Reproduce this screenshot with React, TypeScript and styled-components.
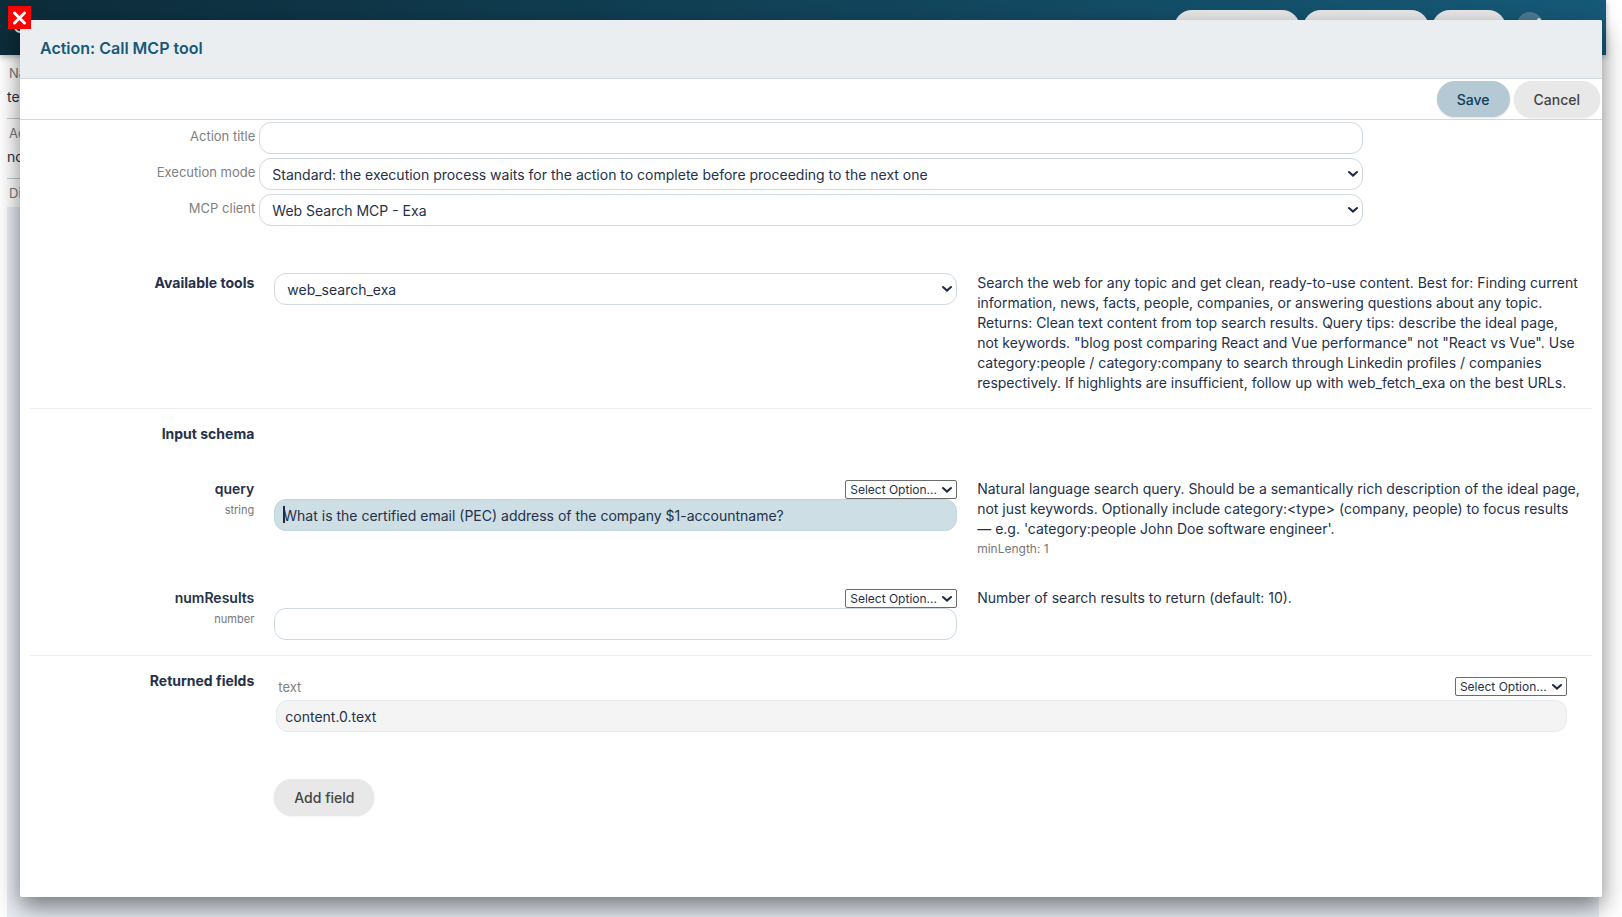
import React from "react";
import styled, { createGlobalStyle, css } from "styled-components";

const GlobalStyle = createGlobalStyle`
  *, *::before, *::after { box-sizing: border-box; }
  body {
    margin: 0;
    background: #fff;
    color: #25314a;
    font: 400 14px/20px Inter, "Liberation Sans", sans-serif;
    overflow: hidden;
  }
  h1, h2, p { margin: 0; }
  button, input, select { font-family: inherit; color: inherit; margin: 0; }
`;

const Page = styled.div`
  position: relative;
  height: 100vh;
  overflow: hidden;
  display: flex;
  flex-direction: column;
`;

const TopBar = styled.header`
  position: relative;
  flex: none;
  display: flex;
  align-items: flex-start;
  justify-content: flex-end;
  gap: 3px;
  height: 55px;
  margin-right: 16px;
  padding: 10px 63px 0 12px;
  background: linear-gradient(90deg, #0d2c3a, #165a78);
  box-shadow: 0 2px 6px rgba(0, 0, 0, 0.3);
`;

const BarLogo = styled.svg`
  width: 24px;
  height: 24px;
  margin-right: auto;
`;

const BarPill = styled.span<{ $width: number }>`
  flex: none;
  width: ${(p) => p.$width}px;
  height: 36px;
  border-radius: 18px;
  background: #e8e8e8;
`;

const BarIcon = styled.svg`
  width: 26px;
  height: 30px;
  margin-left: 8px;
`;

const BackPage = styled.main`
  flex: 1;
  display: flex;
  flex-direction: column;
  margin: 0 23px 0 7px;
  padding-top: 4px;
`;

const BackField = styled.div`
  height: 60px;
  border-bottom: 1px solid #c3ced8;
`;

const BackLabel = styled.div`
  height: 20px;
  margin: 4px 0;
  padding-left: 2px;
  font-size: 13px;
  color: #7a7a7a;
`;

const BackCanvas = styled.div`
  flex: 1;
  background: #e9eef5;
`;

const Dialog = styled.section`
  position: absolute;
  inset: 20px;
  display: flex;
  flex-direction: column;
  background: #fff;
  border-radius: 2px;
  box-shadow: 0 10px 25px rgba(0, 0, 0, 0.5);
`;

const DialogHeader = styled.header`
  display: flex;
  align-items: center;
  height: 59px;
  padding: 0 20px 2px;
  background: #eaeef1;
  border-bottom: 1px solid #cfd8df;
  border-radius: 2px 2px 0 0;
`;

const DialogTitle = styled.h1`
  font-size: 16px;
  line-height: 24px;
  font-weight: 600;
  color: #165a78;
`;

const Toolbar = styled.div`
  display: flex;
  justify-content: flex-end;
  align-items: center;
  gap: 4px;
  height: 41px;
  padding: 0 2px;
  border-bottom: 1px solid #cfd8df;
`;

const PillButton = styled.button<{ $primary?: boolean }>`
  height: 36px;
  padding: 0 20px;
  border: 0;
  border-radius: 18px;
  background: ${(p) => (p.$primary ? "#b4c9d3" : "#e8e8e8")};
  color: ${(p) => (p.$primary ? "#0f4058" : "#444")};
  font-size: 14px;
  font-weight: 500;
  box-shadow: 0 1px 2px rgba(0, 0, 0, 0.12);
`;

const CloseButton = styled.button`
  position: absolute;
  top: 6px;
  left: 8px;
  display: flex;
  align-items: center;
  justify-content: center;
  width: 23px;
  height: 23px;
  padding: 0;
  border: 0;
  background: #f00;
`;

const SettingsForm = styled.div`
  display: flex;
  flex-direction: column;
  gap: 4px;
  padding-top: 2px;
`;

const SettingRow = styled.div`
  display: grid;
  grid-template-columns: 15% 70%;
`;

const SettingLabel = styled.label`
  padding: 4px 2px 0 0;
  text-align: right;
  font-size: 13px;
  color: #808080;
`;

const SettingControl = styled.div`
  padding: 0 2px;
`;

const box = css`
  display: block;
  width: 100%;
  height: 32px;
  border: 1px solid #cfd8df;
  border-radius: 12px;
  background: #fff;
  font-size: 14px;
  outline: none;
`;

const TextBox = styled.input<{ $tone?: "focus" | "readonly" }>`
  ${box}
  padding: 0 8px;
  ${(p) => p.$tone === "focus" && css`background: #cddee5; border-color: #c3d4dd;`}
  ${(p) => p.$tone === "readonly" && css`background: #f4f4f4; border-color: #e6ebef;`}
`;

const SelectWrap = styled.div`
  position: relative;
`;

const SelectArrow = styled.svg`
  position: absolute;
  right: 5px;
  top: calc(50% - 4px);
  width: 10px;
  height: 8px;
  pointer-events: none;
`;

const SelectBox = styled.select`
  ${box}
  appearance: none;
  padding: 0 20px 0 12px;
`;

const MiniSelect = styled.select`
  display: block;
  appearance: none;
  width: 112px;
  height: 19px;
  padding: 0 0 0 4px;
  border: 1px solid #6b6b6b;
  border-radius: 2px;
  background: #fff;
  font-size: 12px;
`;

const Sections = styled.div`
  padding: 32px 10px 0;
`;

const Section = styled.section`
  display: flex;
  flex-direction: column;
  gap: 30px;
  padding: 15px 0;
  & + & { border-top: 1px solid #ebedee; }
`;

const FieldRow = styled.div<{ $wide?: boolean }>`
  display: grid;
  grid-template-columns: ${(p) => (p.$wide ? "15% 85%" : "15% 45% 40%")};
`;

const Cell = styled.div<{ $right?: boolean }>`
  padding: 0 10px;
  text-align: ${(p) => (p.$right ? "right" : "left")};
`;

const SectionTitle = styled.h2`
  min-height: 25px;
  font-size: 14px;
  line-height: 20px;
  font-weight: 700;
`;

const FieldName = styled.label<{ $strong?: boolean }>`
  display: block;
  font-weight: ${(p) => (p.$strong ? 700 : 600)};
`;

const FieldType = styled.div`
  font-size: 11px;
  line-height: 22px;
  color: #777;
`;

const Constraint = styled.div`
  font-size: 12px;
  line-height: 19px;
  color: #777;
`;

const InputStack = styled.div`
  position: relative;
  display: flex;
  flex-direction: column;
  align-items: flex-end;
  padding-top: 1px;
`;

const Caret = styled.span`
  position: absolute;
  left: 9px;
  bottom: 8px;
  width: 2px;
  height: 17px;
  background: #1e2a3e;
`;

const Returned = styled.div`
  display: flex;
  flex-direction: column;
  gap: 4px;
  width: 99%;
  padding: 6px 2px 0;
`;

const ReturnedHead = styled.div`
  display: flex;
  justify-content: space-between;
  align-items: center;
  height: 19px;
  padding-left: 2px;
`;

const ReturnedLabel = styled.label`
  font-size: 13px;
  color: #808080;
`;

const AddArea = styled.div`
  padding-top: 47px;
`;

function Arrow() {
  return (
    <SelectArrow viewBox="0 0 10 8" aria-hidden="true">
      <path d="M1 2l4 3.6L9 2" fill="none" stroke="#1e2a3e" strokeWidth="2" strokeLinecap="round" />
    </SelectArrow>
  );
}

function WideSelect({ id, value }: { id: string; value: string }) {
  return (
    <SelectWrap>
      <SelectBox id={id}>
        <option>{value}</option>
      </SelectBox>
      <Arrow />
    </SelectWrap>
  );
}

function OptionPicker({ label }: { label: string }) {
  return (
    <SelectWrap>
      <MiniSelect aria-label={label}>
        <option>Select Option...</option>
      </MiniSelect>
      <Arrow />
    </SelectWrap>
  );
}

const backFields = [
  ["Na", "te"],
  ["Ac", "no"],
];

export default function App() {
  return (
    <>
      <GlobalStyle />
      <Page>
        <TopBar>
          <BarLogo viewBox="0 0 24 24" aria-hidden="true">
            <circle cx="8" cy="17" r="5" fill="none" stroke="#dfe5e8" strokeWidth="2" />
          </BarLogo>
          <BarPill $width={126} />
          <BarPill $width={126} />
          <BarPill $width={74} />
          <BarIcon viewBox="0 0 26 30" aria-hidden="true">
            <circle cx="13" cy="15" r="13" fill="#4c7a90" />
            <circle cx="22" cy="10" r="2" fill="#e8e8e8" />
          </BarIcon>
        </TopBar>
        <BackPage>
          {backFields.map(([label, value]) => (
            <BackField key={label}>
              <BackLabel>{label}</BackLabel>
              {value}
            </BackField>
          ))}
          <BackLabel>Di</BackLabel>
          <BackCanvas />
        </BackPage>

        <Dialog role="dialog" aria-labelledby="dialog-title">
          <DialogHeader>
            <DialogTitle id="dialog-title">Action: Call MCP tool</DialogTitle>
          </DialogHeader>
          <Toolbar>
            <PillButton type="button" $primary>Save</PillButton>
            <PillButton type="button">Cancel</PillButton>
          </Toolbar>

          <SettingsForm>
            <SettingRow>
              <SettingLabel htmlFor="title">Action title</SettingLabel>
              <SettingControl><TextBox id="title" /></SettingControl>
            </SettingRow>
            <SettingRow>
              <SettingLabel htmlFor="mode">Execution mode</SettingLabel>
              <SettingControl>
                <WideSelect
                  id="mode"
                  value="Standard: the execution process waits for the action to complete before proceeding to the next one"
                />
              </SettingControl>
            </SettingRow>
            <SettingRow>
              <SettingLabel htmlFor="client">MCP client</SettingLabel>
              <SettingControl>
                <WideSelect id="client" value="Web Search MCP - Exa" />
              </SettingControl>
            </SettingRow>
          </SettingsForm>

          <Sections>
            <Section>
              <FieldRow>
                <Cell $right><FieldName $strong htmlFor="tool">Available tools</FieldName></Cell>
                <Cell>
                  <WideSelect id="tool" value="web_search_exa" />
                </Cell>
                <Cell>
                  <p>
                    Search the web for any topic and get clean, ready-to-use content. Best for: Finding current
                    information, news, facts, people, companies, or answering questions about any topic. Returns:
                    Clean text content from top search results. Query tips: describe the ideal page, not keywords.
                    "blog post comparing React and Vue performance" not "React vs Vue". Use category:people /
                    category:company to search through Linkedin profiles / companies respectively. If highlights
                    are insufficient, follow up with web_fetch_exa on the best URLs.
                  </p>
                </Cell>
              </FieldRow>
            </Section>

            <Section>
              <FieldRow>
                <Cell $right><SectionTitle>Input schema</SectionTitle></Cell>
              </FieldRow>
              <FieldRow>
                <Cell $right>
                  <FieldName htmlFor="query">query</FieldName>
                  <FieldType>string</FieldType>
                </Cell>
                <Cell>
                  <InputStack>
                    <OptionPicker label="Insert option into query" />
                    <TextBox
                      id="query"
                      $tone="focus"
                      defaultValue="What is the certified email (PEC) address of the company $1-accountname?"
                    />
                    <Caret />
                  </InputStack>
                </Cell>
                <Cell>
                  <p>
                    Natural language search query. Should be a semantically rich description of the ideal page, not
                    just keywords. Optionally include category:&lt;type&gt; (company, people) to focus results — e.g.
                    'category:people John Doe software engineer'.
                  </p>
                  <Constraint>minLength: 1</Constraint>
                </Cell>
              </FieldRow>
              <FieldRow>
                <Cell $right>
                  <FieldName htmlFor="numResults">numResults</FieldName>
                  <FieldType>number</FieldType>
                </Cell>
                <Cell>
                  <InputStack>
                    <OptionPicker label="Insert option into numResults" />
                    <TextBox id="numResults" />
                  </InputStack>
                </Cell>
                <Cell><p>Number of search results to return (default: 10).</p></Cell>
              </FieldRow>
            </Section>

            <Section>
              <FieldRow $wide>
                <Cell $right><SectionTitle>Returned fields</SectionTitle></Cell>
                <Cell>
                  <Returned>
                    <ReturnedHead>
                      <ReturnedLabel htmlFor="text">text</ReturnedLabel>
                      <OptionPicker label="Insert option into text" />
                    </ReturnedHead>
                    <TextBox id="text" $tone="readonly" readOnly value="content.0.text" />
                  </Returned>
                  <AddArea>
                    <PillButton type="button">Add field</PillButton>
                  </AddArea>
                </Cell>
              </FieldRow>
            </Section>
          </Sections>
        </Dialog>

        <CloseButton type="button" aria-label="Close">
          <svg width="15" height="15" viewBox="0 0 15 15" aria-hidden="true">
            <path d="M2.5 3l10 10M12.5 3l-10 10" stroke="#fff" strokeWidth="3" strokeLinecap="round" />
          </svg>
        </CloseButton>
      </Page>
    </>
  );
}
